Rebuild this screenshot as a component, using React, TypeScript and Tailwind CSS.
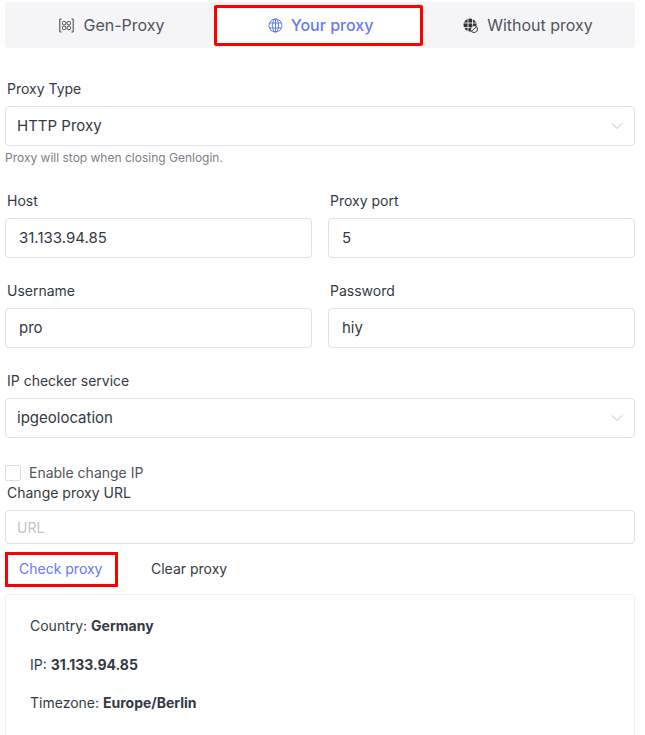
import React from "react";

const Chevron = () => (
  <svg width="12" height="12" viewBox="0 0 12 12" fill="none" stroke="#bfbfc4" strokeWidth="1" className="shrink-0">
    <path d="M1 3.5 L6 8.5 L11 3.5" />
  </svg>
);

const Field = ({ label, value }: { label: string; value: string }) => (
  <div className="flex-1 min-w-0">
    <div className="h-[20px] pl-[2px] text-[14px] leading-[20px] text-[#333a45]">{label}</div>
    <div className="mt-[7px] flex h-[40px] items-center rounded-[4px] border border-[#e0e0e6] px-[13px] text-[15px] text-[#333a45]">{value}</div>
  </div>
);

const SelectField = ({ label, value }: { label: string; value: string }) => (
  <div>
    <div className="h-[20px] pl-[2px] text-[14px] leading-[20px] text-[#333a45]">{label}</div>
    <div className="mt-[7px] flex h-[40px] items-center justify-between rounded-[4px] border border-[#e0e0e6] px-[11px] text-[15px] text-[#333a45]">
      <span>{value}</span>
      <Chevron />
    </div>
  </div>
);

export default function App() {
  return (
    <div className="h-[735px] w-[645px] overflow-hidden bg-white font-['Inter',sans-serif]">
      <div className="ml-[5px] w-[630px] pt-[2px]">
        <div className="flex h-[46px] items-center rounded-[4px] bg-[#f5f5f8] text-[16px] text-[#50545c]">
          <div className="flex w-[209px] items-center justify-center gap-[9px] pl-[5px]">
            <svg width="15" height="15" viewBox="0 0 15 15" fill="none" stroke="#3d4048" strokeWidth="1">
              <path d="M2.500 1H.8v13h1.700M12.500 1h1.700v13h-1.700" />
              <rect x="3.500" y="3.500" width="3.300" height="3.300" rx="1" />
              <rect x="8.200" y="3.500" width="3.300" height="3.300" rx="1" />
              <rect x="3.500" y="8.200" width="3.300" height="3.300" rx="1" />
              <rect x="8.200" y="8.200" width="3.300" height="3.300" rx="1" />
            </svg>
            <span>Gen-Proxy</span>
          </div>
          <div className="flex h-[41px] w-[209px] items-center justify-center gap-[8px] rounded-[2px] border-[3px] border-[#fe0000] bg-white pl-[4px] font-medium text-[#6479f8]">
            <svg width="15" height="15" viewBox="0 0 15 15" fill="none" stroke="#6479f8" strokeWidth="1">
              <circle cx="7.500" cy="7.500" r="6.500" />
              <ellipse cx="7.500" cy="7.500" rx="3" ry="6.500" />
              <path d="M1.500 5h12M1.500 10h12M7.500 1v13" />
            </svg>
            <span>Your proxy</span>
          </div>
          <div className="flex w-[212px] items-center justify-center gap-[9px] pr-[2px]">
            <svg width="15" height="15" viewBox="0 0 15 15">
              <circle cx="7" cy="7" r="6.500" fill="#2f3238" />
              <path d="M.5 5h13M.5 9.500h13M5 .5v13M9.500 .5v13" stroke="#fff" strokeWidth="0.800" />
              <circle cx="11" cy="11" r="3.500" fill="#fff" stroke="#2f3238" strokeWidth="1" />
              <path d="M8.800 13 13.200 9" stroke="#2f3238" strokeWidth="1" />
            </svg>
            <span>Without proxy</span>
          </div>
        </div>

        <div className="mt-[31px]">
          <SelectField label="Proxy Type" value="HTTP Proxy" />
          <div className="mt-[4px] h-[16px] text-[12px] leading-[16px] text-[#7d8088]">Proxy will stop when closing Genlogin.</div>
        </div>

        <div className="mt-[25px] flex gap-[16px]">
          <Field label="Host" value="31.133.94.85" />
          <Field label="Proxy port" value="5" />
        </div>
        <div className="mt-[23px] flex gap-[16px]">
          <Field label="Username" value="pro" />
          <Field label="Password" value="hiy" />
        </div>
        <div className="mt-[23px]">
          <SelectField label="IP checker service" value="ipgeolocation" />
        </div>

        <div className="mt-[27px] flex h-[16px] items-center gap-[8px]">
          <div className="h-[16px] w-[16px] rounded-[2px] border border-[#dcdce2] bg-white" />
          <span className="-mt-[1px] text-[14px] text-[#50545c]">Enable change IP</span>
        </div>
        <div className="mt-[2px] h-[20px] pl-[2px] text-[14px] leading-[20px] text-[#333a45]">Change proxy URL</div>
        <div className="mt-[7px] flex h-[34px] items-center rounded-[4px] border border-[#e0e0e6] px-[11px] text-[14px] text-[#c4c4c8]">URL</div>

        <div className="mt-[8px] flex h-[35px] items-center">
          <div className="flex h-[35px] w-[113px] items-center border-[3px] border-[#fe0000] pb-[2px] pl-[11px] text-[14px] text-[#6479f8]">Check proxy</div>
          <div className="-mt-[2px] ml-[33px] text-[14px] text-[#333a45]">Clear proxy</div>
        </div>

        <div className="mt-[7px] h-[200px] rounded-[4px] border border-[#efeff3] pl-[24px] pt-[21px] text-[14px] text-[#333a45]">
          <div className="h-[20px] leading-[20px]">Country: <b className="font-bold">Germany</b></div>
          <div className="mt-[19px] h-[20px] leading-[20px]">IP: <b className="font-bold">31.133.94.85</b></div>
          <div className="mt-[18px] h-[20px] leading-[20px]">Timezone: <b className="font-bold">Europe/Berlin</b></div>
        </div>
      </div>
    </div>
  );
}
